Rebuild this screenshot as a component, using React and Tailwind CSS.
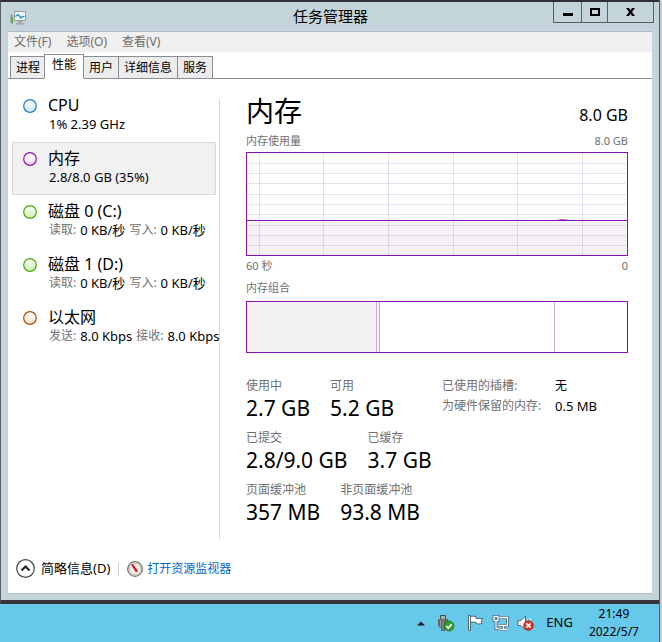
import { useState } from 'react';
import { clsx } from 'clsx';

const menus = ['文件(F)', '选项(O)', '查看(V)'];
const tabs = ['进程', '性能', '用户', '详细信息', '服务'];

const resources = [
  { id: 'cpu', name: 'CPU', ring: '#1a7fb8', fill: '#cfe6f5', parts: [[null, '1% 2.39 GHz']] },
  { id: 'mem', name: '内存', ring: '#8b12ae', fill: '#f2dcf7', parts: [[null, '2.8/8.0 GB (35%)']] },
  { id: 'disk0', name: '磁盘 0 (C:)', ring: '#4da60c', fill: '#cdf0b0', parts: [['读取:', '0 KB/秒'], ['写入:', '0 KB/秒']] },
  { id: 'disk1', name: '磁盘 1 (D:)', ring: '#4da60c', fill: '#cdf0b0', parts: [['读取:', '0 KB/秒'], ['写入:', '0 KB/秒']] },
  { id: 'eth', name: '以太网', ring: '#a74f01', fill: '#fbe3d0', parts: [['发送:', '8.0 Kbps'], ['接收:', '8.0 Kbps']] },
];

const stats = [
  [['使用中', '2.7 GB'], ['可用', '5.2 GB']],
  [['已提交', '2.8/9.0 GB'], ['已缓存', '3.7 GB']],
  [['页面缓冲池', '357 MB'], ['非页面缓冲池', '93.8 MB']],
];

const gridX = [13, 77, 142, 207, 271, 336];
const gridY = [11, 21, 31, 42, 52, 62, 73, 83, 93];

function AppIcon() {
  return (
    <svg width="17" height="16" viewBox="0 0 17 16" aria-hidden="true">
      <rect x="0.5" y="4.5" width="2.5" height="9" fill="#9aa0a3" />
      <rect x="1" y="7" width="2" height="6" fill="#4db53c" />
      <rect x="4.5" y="1.5" width="11" height="9" fill="#e8f6fc" stroke="#9b9d9f" />
      <path d="M5.5 6.5l2.5-2 3 3.5 1.5-1.5h2" fill="none" stroke="#1b87b8" strokeWidth="1.2" />
      <path d="M8 11h4v2h2v1.500H6V13h2z" fill="#a5a8aa" />
    </svg>
  );
}

function Ring({ id, ring, fill }) {
  return (
    <svg width="14" height="14" viewBox="0 0 14 14" className="shrink-0" aria-hidden="true">
      <defs>
        <linearGradient id={`ring-${id}`} x1="0" y1="0" x2="0" y2="1">
          <stop offset="0" stopColor="#fff" />
          <stop offset="1" stopColor={fill} />
        </linearGradient>
      </defs>
      <circle cx="7" cy="7" r="6.300" fill={`url(#ring-${id})`} stroke={ring} strokeWidth="1.2" />
    </svg>
  );
}

function UsageGraph() {
  return (
    <svg viewBox="0 0 382 104" preserveAspectRatio="none" className="block w-full h-[104px]" shapeRendering="crispEdges" role="img" aria-label="内存使用量">
      <rect width="382" height="104" fill="#fff" />
      <rect x="1" y="69" width="380" height="34" fill="#f4f2f4" />
      {gridX.map(x => <rect key={x} x={x} y="1" width="1" height="102" fill={'#7a1f96'} fillOpacity="0.14" />)}
      {gridY.map(y => <rect key={y} x="1" y={y} width="379" height="1" fill={'#7a1f96'} fillOpacity="0.14" />)}
      <rect x="0" y="68" width="382" height="1" fill="#8b12ae" />
      <rect x="311" y="67" width="11" height="1" fill="#8b12ae" fillOpacity="0.3" />
      <rect x="314" y="67" width="5" height="1" fill="#8b12ae" fillOpacity="0.5" />
      <rect x="0.5" y="0.5" width="381" height="103" fill="none" stroke="#8b12ae" />
    </svg>
  );
}

function TrayIcons() {
  return (
    <>
      <button type="button" aria-label="显示隐藏的图标" className="mr-3">
        <svg width="8" height="5" viewBox="0 0 8 5"><path d="M0 4.500L4 0.500l4 4z" fill="#1d1d1d" /></svg>
      </button>
      <button type="button" aria-label="安全删除硬件" className="mr-3">
        <svg width="18" height="18" viewBox="0 0 18 18">
          <path d="M3.500 1.500h5v4h-5z" fill="#a9a9a9" stroke="#4c4c4c" />
          <path d="M1 5h10v6l-2 3H8v3H4v-3H3l-2-3z" fill="#666" />
          <path d="M3.500 6v7M6 6v10" stroke="#999" />
          <circle cx="12" cy="12" r="5" fill="#2f9d2c" stroke="#1c7a1e" strokeWidth="0.800" />
          <path d="M9.300 12l2 2.200 3.400-4.200" fill="none" stroke="#fff" strokeWidth="1.800" />
        </svg>
      </button>
      <button type="button" aria-label="操作中心" className="mr-2">
        <svg width="17" height="18" viewBox="0 0 17 18">
          <path d="M1.500 1.500h2v15h-2z" fill="#fff" stroke="#4b5a66" strokeWidth="0.900" />
          <path d="M3.500 2.500c2-.6 4-.3 5.500.3v1.700h7l-2 2.500 1 2.500c-2 .6-4.500.8-6-.2V8.500c-1.500-.6-3.500-.5-5.500 0z" fill="#fff" stroke="#4b5a66" strokeWidth="0.900" />
        </svg>
      </button>
      <button type="button" aria-label="网络" className="mr-2">
        <svg width="17" height="18" viewBox="0 0 17 18" fill="none">
          <path d="M7.500 3.500h8v8h-9M11.500 12v3M8 15.500h7" stroke="#40596a" strokeWidth="2.600" />
          <path d="M2 2.500h4v4H2zM4 7v7.500h3" stroke="#40596a" strokeWidth="2.800" />
          <path d="M7.500 3.500h8v8h-9M11.500 12v3M8 15.500h7" stroke="#fff" strokeWidth="1.300" />
          <path d="M2 2.500h4v4H2zM4 7v7.500h3" stroke="#fff" strokeWidth="1.300" />
        </svg>
      </button>
      <button type="button" aria-label="音量" className="mr-3">
        <svg width="17" height="18" viewBox="0 0 17 18">
          <path d="M1 6.500h3l4.500-4.500v14L4 11.500H1z" fill="#fff" stroke="#4b5a66" strokeWidth="0.900" />
          <path d="M10.500 5.500c1 1.500 1 5 0 6.500M12.500 4c1.500 2 1.500 5 1 7" fill="none" stroke="#fff" />
          <circle cx="11.500" cy="11.500" r="4.800" fill="#e0301e" stroke="#b01d10" strokeWidth="0.800" />
          <path d="M9.300 9.300l4.400 4.400M13.700 9.300l-4.400 4.400" stroke="#fff" strokeWidth="1.700" />
        </svg>
      </button>
    </>
  );
}

export default function App() {
  const [tab, setTab] = useState('性能');
  const [selected, setSelected] = useState('mem');

  return (
    <div className="flex min-h-screen bg-[#c9c9cb] font-['Noto_Sans','Noto_Sans_CJK_SC',sans-serif] text-xs text-black">
      <div className="flex-1 min-w-0 flex flex-col border-r border-[#5b5b66] mr-0.5">
        {/* Window */}
        <div className="flex-1 flex flex-col bg-[#c3d5db] border-l border-l-[#5b5b66] border-t-2 border-t-[#322e33] border-b-4 border-b-[#37353b]">
          <header className="flex h-[29px] items-start">
            <div className="w-[107px] pl-[9px] pt-2"><AppIcon /></div>
            <h1 className="flex-1 text-center text-[15px] leading-7">任务管理器</h1>
            <div className="flex h-[21px] mr-[5px] border border-t-0 border-[#5b5b66] divide-x divide-[#5b5b66]">
              <button type="button" aria-label="最小化" className="w-7 flex items-center justify-center">
                <svg width="10" height="10" viewBox="0 0 10 10"><path d="M0 6h10v3H0z" /></svg>
              </button>
              <button type="button" aria-label="最大化" className="w-[26px] flex items-center justify-center">
                <svg width="10" height="8" viewBox="0 0 10 8"><path d="M1 1h8v6H1z" fill="none" stroke="#000" strokeWidth="2" /></svg>
              </button>
              <button type="button" aria-label="关闭" className="w-[45px] flex items-center justify-center">
                <svg width="9" height="8" viewBox="0 0 9 8"><path d="M0 0h3l1.500 2.300L6 0h3L6 4l3 4H6L4.500 5.700 3 8H0l3-4z" /></svg>
              </button>
            </div>
          </header>

          <div className="flex-1 flex flex-col mx-[7px] mb-[6px] bg-white border-y border-[#b0bac8]">
            <nav className="flex h-5 items-center gap-[15px] px-1.5 bg-[#f0f0f0] text-[#6d6d6d]">
              {menus.map(m => <button key={m} type="button">{m}</button>)}
            </nav>

            {/* Tabs */}
            <div role="tablist" className="flex items-end h-[27px] pl-0.5 border-b border-[#8a8c96]">
              {tabs.map(t => (
                <button
                  key={t}
                  type="button"
                  role="tab"
                  aria-selected={t === tab}
                  onClick={() => setTab(t)}
                  className={clsx(
                    'border border-[#8a8c96]',
                    t === tab ? 'h-[25px] -mb-px not-first:-ml-0.5 px-[7px] pb-1 bg-white border-b-white' : 'h-[22px] px-[5px] border-b-0 bg-[#ececec] not-first:border-l-0'
                  )}
                >
                  {t}
                </button>
              ))}
            </div>

            <main className="flex-1 flex">
              {/* Resource list */}
              <div className="w-[212px] shrink-0 mt-5 mb-1 border-r border-[#d9d9d9]">
                <ul className="w-[204px] ml-1 -mt-[10px]">
                  {resources.map(r => (
                    <li key={r.id}>
                      <button
                        type="button"
                        onClick={() => setSelected(r.id)}
                        className={clsx(
                          'flex w-full h-[53px] gap-[11px] pl-[10px] pt-1.5 text-left border whitespace-nowrap',
                          r.id === selected ? 'bg-[#f1f1f1] border-[#d9d9d9]' : 'border-transparent'
                        )}
                      >
                        <span className="pt-[3px]"><Ring {...r} /></span>
                        <span>
                          <span className="block text-base leading-[18px]">{r.name}</span>
                          <span className="flex gap-1 pl-px text-[13px] leading-5">
                            {r.parts.map(([label, value]) => (
                              <span key={value + label} className="flex gap-1">
                                {label && <span className="text-xs leading-5 text-[#707070]">{label}</span>}
                                <span>{value}</span>
                              </span>
                            ))}
                          </span>
                        </span>
                      </button>
                    </li>
                  ))}
                </ul>
              </div>

              {/* Memory details */}
              <section className="flex-1 min-w-0 pl-[26px] pr-6 pt-4">
                <div className="flex items-end justify-between leading-8">
                  <h2 className="text-[28px]">内存</h2>
                  <span className="text-base leading-6">8.0 GB</span>
                </div>
                <div className="flex justify-between pt-1.5 pb-[3px] text-[11px] leading-4 text-[#707070]">
                  <span>内存使用量</span>
                  <span>8.0 GB</span>
                </div>
                <UsageGraph />
                <div className="flex justify-between pt-0.5 text-[11px] leading-4 text-[#707070]">
                  <span>60 秒</span>
                  <span>0</span>
                </div>
                <div className="pt-1.5 pb-[5px] text-[11px] leading-4 text-[#707070]">内存组合</div>
                <div className="grid grid-cols-[130fr_3fr_175fr_72fr] h-[52px] border border-[#8b12ae]">
                  <div className="bg-[#f4f1f5] border-r border-[#cbaad8]" />
                  <div className="bg-[#f4f1f5] border-r border-[#cbaad8]" />
                  <div className="border-r border-[#cbaad8]" />
                  <div />
                </div>

                <div className="flex pt-[25px]">
                  <div className="w-[196px] shrink-0">
                    {stats.map((row, i) => (
                      <dl key={i} className="flex gap-5 h-[52px] whitespace-nowrap">
                        {row.map(([label, value]) => (
                          <div key={label}>
                            <dt className="leading-4 text-[#707070]">{label}</dt>
                            <dd className="text-[21px] leading-7">{value}</dd>
                          </div>
                        ))}
                      </dl>
                    ))}
                  </div>
                  <dl className="grid grid-cols-[113px_auto] gap-y-1 content-start leading-4 whitespace-nowrap">
                    <dt className="text-[#707070]">已使用的插槽:</dt>
                    <dd>无</dd>
                    <dt className="text-[#707070]">为硬件保留的内存:</dt>
                    <dd className="text-[13px] leading-4">0.5 MB</dd>
                  </dl>
                </div>
              </section>
            </main>

            <footer className="flex items-center h-[49px] pl-2">
              <button type="button" className="flex items-center gap-1.5 text-[13px]">
                <svg width="19" height="19" viewBox="0 0 19 19" aria-hidden="true">
                  <circle cx="9.500" cy="9.500" r="8.800" fill="#fff" stroke="#444" strokeWidth="1.200" />
                  <path d="M5.500 11.500l4-4 4 4" fill="none" stroke="#222" strokeWidth="2.200" />
                </svg>
                简略信息(D)
              </button>
              <span className="w-px h-[14px] mx-2 bg-[#d0d0d0]" />
              <a href="#resmon" className="flex items-center gap-1 text-[#0066cc]">
                <svg width="16" height="16" viewBox="0 0 16 16" aria-hidden="true">
                  <circle cx="8" cy="8" r="7.300" fill="#f3f1ea" stroke="#77716b" strokeWidth="1.300" />
                  <circle cx="8" cy="8" r="5.600" fill="none" stroke="#c9c4b8" />
                  <path d="M4 3.500l2-.5 5 7-2 1.500z" fill="#d2161c" />
                </svg>
                打开资源监视器
              </a>
            </footer>
          </div>
        </div>

        {/* Taskbar */}
        <div className="flex items-center justify-end h-[38px] pr-5 bg-[#66c9e9]">
          <TrayIcons />
          <span className="mr-4 text-[13px]">ENG</span>
          <div className="text-center leading-[18px]">
            <div>21:49</div>
            <div>2022/5/7</div>
          </div>
        </div>
      </div>
    </div>
  );
}
